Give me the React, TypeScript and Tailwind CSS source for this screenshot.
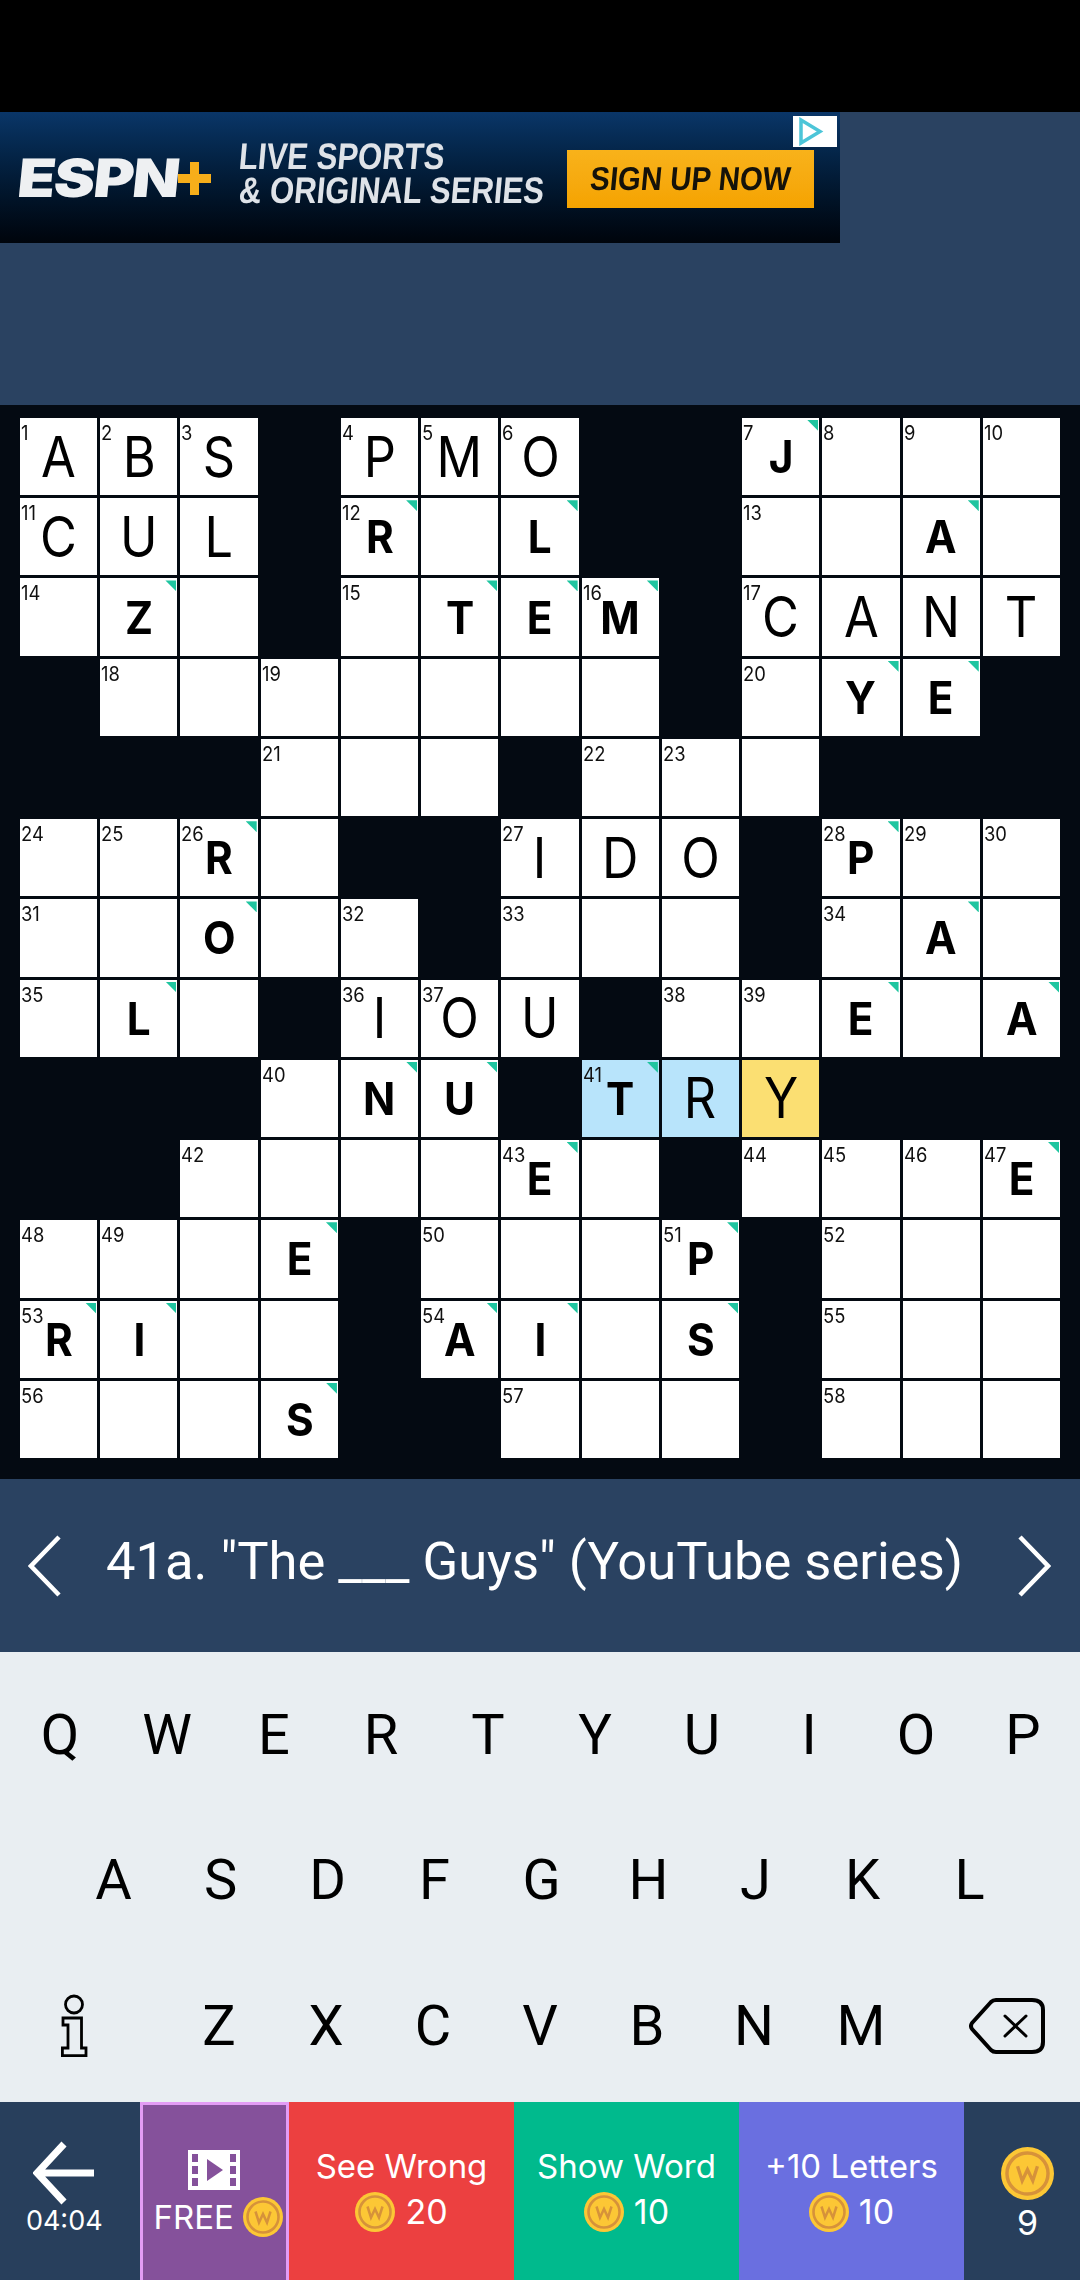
import React from "react";

type CellDef = { n?: number; l?: string; b?: boolean; bg?: string } | null;

// compact row notation: "#" black, "." empty, "12" number, letter after ":"; * = bold revealed letter
const rows: string[] = [
    "1:A 2:B 3:S # 4:P 5:M 6:O # # 7:*J 8 9 10",
    ":C :U :L # 12:*R . :*L # # 13 . :*A .",
    "14 :*Z . # 15 :*T :*E 16:*M # 17:C :A :N :T",
    "# 18 . 19 . . . . # 20 :*Y :*E #",
    "# # # 21 . . # 22 23 . # # #",
    "24 25 26:*R . # # 27:I :D :O # 28:*P 29 30",
    "31 . :*O . 32 # 33 . . # 34 :*A .",
    "35 :*L . # 36:I 37:O :U # 38 39 :*E . :*A",
    "# # # 40 :*N :*U # 41:*T :R :Y # # #",
    "# # 42 . . . 43:*E . # 44 45 46 47:*E",
    "48 49 . :*E # 50 . . 51:*P # 52 . .",
    "53:*R :*I . . # 54:*A :*I . :*S # 55 . .",
    "56 . . :*S # # 57 . . # 58 . .",
];

function parseCell(token: string, r: number, c: number): CellDef {
    if (token === "#") return null;
    const cell: NonNullable<CellDef> = {};
    if (token !== ".") {
        const [num, letter] = token.split(":");
        if (num) cell.n = Number(num);
        if (letter) {
            cell.b = letter.startsWith("*");
            cell.l = letter.replace("*", "");
        }
    }
    if (r === 1 && c === 0) cell.n = 11;
    if (r === 8 && (c === 7 || c === 8)) cell.bg = "bg-[#b8e4fb]";
    if (r === 8 && c === 9) cell.bg = "bg-[#fbdf72]";
    return cell;
}

function Cell({ cell }: { cell: CellDef }) {
    if (!cell) return <div />;
    return (
        <div className={`relative flex items-center justify-center text-black ${cell.bg ?? "bg-white"}`}>
            {cell.n !== undefined && (
                <span className="absolute left-[1px] top-[5px] origin-left scale-x-[0.92] text-[20px] leading-[20px] text-[#111]">
                    {cell.n}
                </span>
            )}
            {cell.b && (
                <span className="absolute right-[1px] top-[2px] h-[11px] w-[11px] bg-[#1fc5a0] [clip-path:polygon(0_0,100%_0,100%_100%)]" />
            )}
            {cell.l && (
                <span
                    className={
                        cell.b
                            ? "scale-x-[0.94] text-[45px] font-bold leading-none"
                            : "scale-x-[0.9] text-[56px] font-normal leading-none"
                    }
                >
                    {cell.l}
                </span>
            )}
        </div>
    );
}

function Coin({ size = 40 }: { size?: number }) {
    return (
        <svg width={size} height={size} viewBox="0 0 40 40" className="shrink-0">
            <circle cx="20" cy="20" r="20" fill="#fcc735" />
            <circle cx="20" cy="20" r="15.5" fill="none" stroke="#d6923a" strokeWidth="2.6" />
            <path d="M12.5 14.5 L16 25.5 L20 17 L24 25.5 L27.5 14.5" fill="none" stroke="#d6923a" strokeWidth="2.5" />
        </svg>
    );
}

function Chevron({ right }: { right?: boolean }) {
    return (
        <svg width="34" height="64" viewBox="0 0 34 64" fill="none" stroke="#ffffff" strokeWidth="4.5" className={right ? "rotate-180" : ""}>
            <path d="M31 3 L3 32 L31 61" />
        </svg>
    );
}

function Key({ k }: { k: string }) {
    return <div className="flex w-[107px] items-center justify-center">{k}</div>;
}

function HintButton({ label, cost, bg }: { label: string; cost: number; bg: string }) {
    return (
        <div className={`flex w-[225px] flex-col items-center pt-[44px] text-white ${bg}`}>
            <span className="text-[33px] leading-[40px]">{label}</span>
            <div className="mt-[6px] flex items-center gap-[10px] text-[34px] leading-[40px]">
                <Coin />
                <span>{cost}</span>
            </div>
        </div>
    );
}

export default function App() {
    return (
        <div className="flex h-[2280px] w-[1080px] flex-col overflow-hidden bg-[#2a4261] font-['Inter',sans-serif]">
            <div className="h-[112px] bg-black" />

            {/* ad banner */}
            <div className="relative flex h-[131px] w-[840px] items-center bg-gradient-to-b from-[#0a3668] to-[#00050c] text-white">
                <div className="ml-[18px] mt-[2px] flex w-[200px] items-center">
                    <span className="w-[160px] origin-left scale-x-[1.17] skew-x-[-5deg] whitespace-nowrap text-[53px] font-black leading-none tracking-[-1.5px] text-[#eef0f2]">
                        ESPN
                    </span>
                    <svg width="33" height="33" viewBox="0 0 33 33" fill="#f6ae1a">
                        <path d="M12 0 H21 V12 H33 V21 H21 V33 H12 V21 H0 V12 H12 Z" />
                    </svg>
                </div>
                <div className="-mt-[8px] ml-[21px] flex w-[310px] flex-col font-['Liberation_Sans',sans-serif] text-[37px] font-bold leading-[34px] text-[#dfe3e8] blur-[0.4px]">
                    <span className="origin-left scale-x-[0.84] skew-x-[-6deg] whitespace-nowrap">LIVE SPORTS</span>
                    <span className="origin-left scale-x-[0.84] skew-x-[-6deg] whitespace-nowrap">&amp; ORIGINAL SERIES</span>
                </div>
                <div className="ml-[18px] mt-[3px] flex h-[58px] w-[247px] items-center justify-center bg-gradient-to-b from-[#f8b21a] to-[#f5a300] font-['Liberation_Sans',sans-serif] text-[33px] font-bold text-[#15120a] blur-[0.4px]">
                    <span className="scale-x-[0.89] skew-x-[-6deg] whitespace-nowrap">SIGN UP NOW</span>
                </div>
                <div className="absolute left-[793px] top-[4px] flex h-[31px] w-[44px] items-center bg-white pl-[4px]">
                    <svg width="27" height="29" viewBox="0 0 27 29" fill="none" stroke="#4cc5d8" strokeWidth="3.5">
                        <path d="M4 3 L23 14.5 L4 26 Z" />
                    </svg>
                </div>
            </div>

            <div className="h-[162px]" />

            {/* crossword */}
            <div className="h-[1074px] bg-[#040a12] px-[20px] pt-[13px]">
                <div className="grid h-[1040px] grid-cols-[repeat(13,1fr)] grid-rows-[repeat(13,1fr)] gap-[3px]">
                    {rows.flatMap((row, r) =>
                        row.split(" ").map((token, c) => <Cell key={`${r}-${c}`} cell={parseCell(token, r, c)} />)
                    )}
                </div>
            </div>

            {/* current clue */}
            <div className="flex h-[173px] items-center justify-between bg-[#2a4261] pl-[28px] pr-[29px] text-white">
                <Chevron />
                <span className="-mt-[8px] mr-[10px] font-['Roboto',sans-serif] text-[52.5px] leading-none">
                    41a. "The ___ Guys" (YouTube series)
                </span>
                <Chevron right />
            </div>

            {/* keyboard */}
            <div className="flex h-[450px] flex-col bg-[#e9eef2] pt-[10px] font-['Roboto',sans-serif] text-[56px] text-black">
                <div className="flex h-[145.5px] pl-[6.5px]">
                    {"QWERTYUIOP".split("").map((k) => <Key key={k} k={k} />)}
                </div>
                <div className="flex h-[145.5px] pl-[60px]">
                    {"ASDFGHJKL".split("").map((k) => <Key key={k} k={k} />)}
                </div>
                <div className="flex h-[145.5px] pl-[20px]">
                    <div className="mr-[38.5px] flex w-[107px] items-center justify-center">
                        <svg width="30" height="63" viewBox="0 0 30 63" fill="none" stroke="#000" strokeWidth="2.8">
                            <circle cx="15" cy="10.5" r="8.5" />
                            <path d="M4 24 H22.5 V54 H27 V61.6 H3.4 V54 H9 V31 H4 Z" />
                        </svg>
                    </div>
                    {"ZXCVBNM".split("").map((k) => <Key key={k} k={k} />)}
                    <div className="ml-[38.5px] flex w-[107px] items-center justify-center">
                        <svg width="76" height="56" viewBox="0 0 76 56" fill="none" stroke="#000" strokeWidth="4" strokeLinejoin="round">
                            <path d="M27 2 H63 Q74 2 74 12 V44 Q74 54 63 54 H27 Q24 54 22 52 L3 31 Q1 28 3 25 L22 4 Q24 2 27 2 Z" />
                            <path d="M36 18 L57 38 M57 18 L36 38" strokeWidth="3" strokeLinecap="round" />
                        </svg>
                    </div>
                </div>
            </div>

            {/* bottom toolbar */}
            <div className="flex h-[178px] text-white">
                <div className="flex w-[139.5px] flex-col items-center bg-[#283f5c] pr-[11px] pt-[39px]">
                    <svg width="62" height="64" viewBox="0 0 62 64" fill="none" stroke="#ffffff" strokeWidth="7">
                        <path d="M31 3 L4 32 L31 61 M5 32 H61" />
                    </svg>
                    <span className="text-[27px] leading-[32px]">04:04</span>
                </div>
                <div className="flex w-[149.5px] flex-col items-center border-x-[3px] border-t-[3px] border-[#e39cf5] bg-[#85519b] pt-[45px]">
                    <svg width="52" height="40" viewBox="0 0 52 40">
                        <path
                            fill="#ffffff"
                            fillRule="evenodd"
                            d="M0 0 H52 V40 H0 Z M4 4 V12 H10 V4 Z M4 16 V24 H10 V16 Z M4 28 V36 H10 V28 Z M42 4 V12 H48 V4 Z M42 16 V24 H48 V16 Z M42 28 V36 H48 V28 Z M19 9 V31 L35 20 Z"
                        />
                    </svg>
                    <div className="mt-[7px] flex items-center gap-[9px] pl-[8px] text-[33px] leading-[40px]">
                        <span>FREE</span>
                        <Coin />
                    </div>
                </div>
                <HintButton label="See Wrong" cost={20} bg="bg-[#ec4040]" />
                <HintButton label="Show Word" cost={10} bg="bg-[#00ba8d]" />
                <HintButton label="+10 Letters" cost={10} bg="bg-[#6a6fe0]" />
                <div className="flex flex-1 flex-col items-center bg-[#283f5c] pl-[11px] pt-[45px]">
                    <Coin size={53} />
                    <span className="mt-[3px] text-[34px] leading-[40px]">9</span>
                </div>
            </div>
        </div>
    );
}
